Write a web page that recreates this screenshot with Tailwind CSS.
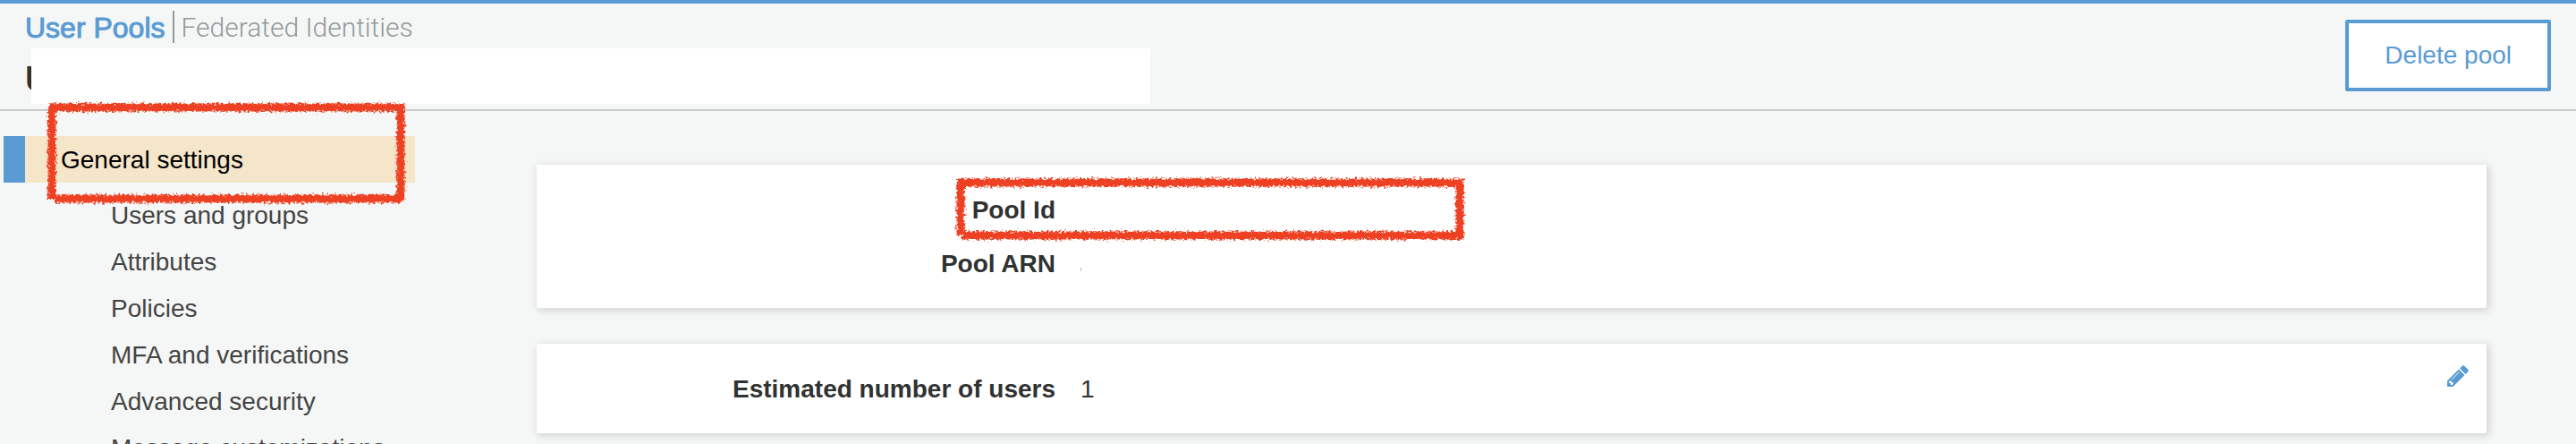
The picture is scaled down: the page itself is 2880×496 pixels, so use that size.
<!DOCTYPE html>
<html lang="en">
<head>
<meta charset="utf-8">
<title>User Pools</title>
<script src="https://cdn.jsdelivr.net/npm/@tailwindcss/browser@4"></script>
</head>
<body class="h-screen overflow-hidden bg-[#f5f7f6] font-['Liberation_Sans',Arial,sans-serif] text-[28px] text-[#444444]">
<svg class="absolute size-0" aria-hidden="true">
  <filter id="crayon" x="-10%" y="-20%" width="120%" height="140%">
    <feTurbulence type="fractalNoise" baseFrequency="0.4" numOctaves="3" seed="4" result="n"/>
    <feDisplacementMap in="SourceGraphic" in2="n" scale="8" xChannelSelector="R" yChannelSelector="G"/>
  </filter>
</svg>

<header class="flex items-start justify-between border-t-4 border-b-2 border-t-[#5a9bd3] border-b-[#c9cccb] pr-7 pl-7">
  <div class="pb-1.5">
    <nav class="flex h-[50px] items-center pt-0.5 text-[32px] leading-9" aria-label="Console">
      <a href="#" class="pt-0.5 text-[#5a9bd3] [-webkit-text-stroke:1px]">User Pools</a>
      <span class="mx-2 h-9 w-0.5 bg-[#929a9b]"></span>
      <a href="#" class="pt-0.5 font-['Roboto'] text-[30px] font-light text-[#929a9b]">Federated Identities</a>
    </nav>
    <div class="flex h-[62px]">
      <h1 class="w-[7px] overflow-hidden pt-1 text-[40px] leading-[60px] font-bold text-[#303231]">U</h1>
      <div class="w-[1251px] bg-white"></div>
    </div>
  </div>
  <button class="mt-[18px] h-20 rounded-xs border-4 border-[#5a9bd3] bg-white px-10 text-[#5a9bd3]">Delete pool</button>
</header>

<div class="flex items-start">
  <nav class="w-[464px] shrink-0 pt-7 pl-1" aria-label="Pool settings">
    <div class="relative">
      <a href="#" class="block h-[52px] border-l-24 border-[#5a9bd3] bg-[#f5e6ca] pl-10 leading-[54px] text-black">General settings</a>
      <svg class="pointer-events-none absolute -top-10 left-[46px] h-[120px] w-[408px]" viewBox="0 0 408 120" fill="none" stroke="#ee4023" stroke-width="9" filter="url(#crayon)" aria-hidden="true"><path d="M8 111V8M5 8H398V112M10 110H398"/></svg>
    </div>
    <ul class="mt-[11px] pl-[120px] leading-[52px]">
      <li><a href="#">Users and groups</a></li>
      <li><a href="#">Attributes</a></li>
      <li><a href="#">Policies</a></li>
      <li><a href="#">MFA and verifications</a></li>
      <li><a href="#">Advanced security</a></li>
      <li><a href="#">Message customizations</a></li>
    </ul>
  </nav>

  <main class="flex flex-1 flex-col gap-10 pt-[60px] pr-[100px] pl-[136px] leading-[60px]">
    <dl class="rounded-xs bg-white pt-[21px] pb-[19px] shadow-[2px_2px_8px_1px_rgba(0,0,0,0.14)]">
      <div class="relative flex gap-7">
        <dt class="w-[580px] text-right font-bold text-[#303231]">Pool Id</dt>
        <dd></dd>
        <dd class="pointer-events-none absolute -top-2 left-[465px]"><svg class="h-[76px] w-[576px]" viewBox="0 0 576 76" fill="none" stroke="#ee4023" stroke-width="9" filter="url(#crayon)" aria-hidden="true"><path d="M9 66V7M5 7H567V67M11 66H571"/></svg></dd>
      </div>
      <div class="flex items-center gap-7">
        <dt class="w-[580px] text-right font-bold text-[#303231]">Pool ARN</dt>
        <dd class="mt-3 h-1 w-px bg-[#b8baba]"></dd>
      </div>
    </dl>
    <section class="relative rounded-xs bg-white pt-[21px] pb-[19px] shadow-[2px_2px_8px_1px_rgba(0,0,0,0.14)]">
      <dl class="flex gap-7">
        <dt class="w-[580px] text-right font-bold text-[#303231]">Estimated number of users</dt>
        <dd class="text-[#303231]">1</dd>
      </dl>
      <button class="absolute top-6 right-5 size-6 text-[#5a9bd3]" aria-label="Edit"><svg class="size-6" viewBox="0 0 1536 1536" fill="currentColor"><path d="M363 1408l91-91-235-235-91 91v107h128v128h107zm523-928q0-22-22-22-10 0-17 7l-542 542q-7 7-7 17 0 22 22 22 10 0 17-7l542-542q7-7 7-17zm-54-192l416 416-832 832h-416v-416zm683 96q0 53-37 90l-166 166-416-416 166-165q36-38 90-38 53 0 91 38l235 234q37 39 37 91z"/></svg></button>
    </section>
  </main>
</div>
</body>
</html>
